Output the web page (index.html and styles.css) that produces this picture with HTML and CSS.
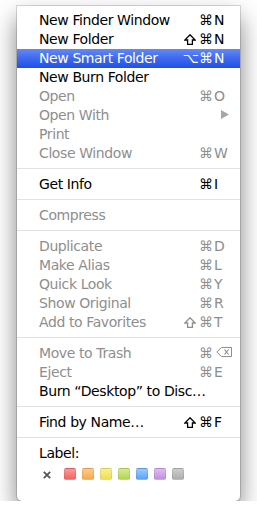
FILE: index.html
```html
<!DOCTYPE html>
<html>
<head>
<meta charset="utf-8">
<link rel="stylesheet" href="styles.css">
</head>
<body>
<div class="menu">
  <div class="item"><span class="label">New Finder Window</span><span class="mods">⌘</span><span class="key">N</span></div>
  <div class="item"><span class="label">New Folder</span><span class="mods"><svg class="shift" width="12" height="11" viewBox="0 0 12 11"><path d="M6 0.8 L11.2 6 H8.4 V10.3 H3.6 V6 H0.8 Z" fill="none" stroke="currentColor" stroke-width="1.3" stroke-linejoin="miter"/></svg>⌘</span><span class="key">N</span></div>
  <div class="item hl"><span class="label">New Smart Folder</span><span class="mods">⌥⌘</span><span class="key">N</span></div>
  <div class="item"><span class="label">New Burn Folder</span><span class="mods"></span><span class="key"></span></div>
  <div class="item off"><span class="label">Open</span><span class="mods">⌘</span><span class="key">O</span></div>
  <div class="item off"><span class="label">Open With</span><span class="mods"></span><span class="key"><svg class="arrow" width="8" height="9" viewBox="0 0 8 9"><path d="M0 0 L8 4.5 L0 9 Z" fill="#a6a6a6"/></svg></span></div>
  <div class="item off"><span class="label">Print</span><span class="mods"></span><span class="key"></span></div>
  <div class="item off"><span class="label">Close Window</span><span class="mods">⌘</span><span class="key">W</span></div>
  <div class="sep"></div>
  <div class="item"><span class="label">Get Info</span><span class="mods">⌘</span><span class="key">I</span></div>
  <div class="sep"></div>
  <div class="item off"><span class="label">Compress</span><span class="mods"></span><span class="key"></span></div>
  <div class="sep"></div>
  <div class="item off"><span class="label">Duplicate</span><span class="mods">⌘</span><span class="key">D</span></div>
  <div class="item off"><span class="label">Make Alias</span><span class="mods">⌘</span><span class="key">L</span></div>
  <div class="item off"><span class="label">Quick Look</span><span class="mods">⌘</span><span class="key">Y</span></div>
  <div class="item off"><span class="label">Show Original</span><span class="mods">⌘</span><span class="key">R</span></div>
  <div class="item off"><span class="label">Add to Favorites</span><span class="mods"><svg class="shift" width="12" height="11" viewBox="0 0 12 11"><path d="M6 0.8 L11.2 6 H8.4 V10.3 H3.6 V6 H0.8 Z" fill="none" stroke="currentColor" stroke-width="1.3" stroke-linejoin="miter"/></svg>⌘</span><span class="key">T</span></div>
  <div class="sep"></div>
  <div class="item off"><span class="label">Move to Trash</span><span class="mods">⌘</span><span class="key"><svg class="del" width="16" height="10" viewBox="0 0 16 10"><path d="M5.5 0.5 H15.5 V9.5 H5.5 L0.8 5 Z" fill="none" stroke="#8e8e8e" stroke-width="1"/><path d="M8.5 2.5 L12.5 7.5 M12.5 2.5 L8.5 7.5" stroke="#8e8e8e" stroke-width="1.2"/></svg></span></div>
  <div class="item off"><span class="label">Eject</span><span class="mods">⌘</span><span class="key">E</span></div>
  <div class="item"><span class="label">Burn “Desktop” to Disc…</span><span class="mods"></span><span class="key"></span></div>
  <div class="sep"></div>
  <div class="item"><span class="label">Find by Name…</span><span class="mods"><svg class="shift" width="12" height="11" viewBox="0 0 12 11"><path d="M6 0.8 L11.2 6 H8.4 V10.3 H3.6 V6 H0.8 Z" fill="none" stroke="currentColor" stroke-width="1.3" stroke-linejoin="miter"/></svg>⌘</span><span class="key">F</span></div>
  <div class="sep"></div>
  <div class="item"><span class="label">Label:</span><span class="mods"></span><span class="key"></span></div>
  <div class="labels">
    <svg class="none" width="8" height="8" viewBox="0 0 8 8"><path d="M0.8 0.8 L7.2 7.2 M7.2 0.8 L0.8 7.2" stroke="#555" stroke-width="1.8"/></svg>
    <span class="sw red"></span>
    <span class="sw orange"></span>
    <span class="sw yellow"></span>
    <span class="sw green"></span>
    <span class="sw blue"></span>
    <span class="sw purple"></span>
    <span class="sw gray"></span>
  </div>
</div>
</body>
</html>
```
FILE: styles.css
```css
html, body {
  margin: 0;
  background: #fff;
}
body {
  font-family: "DejaVu Sans", "Liberation Sans", sans-serif;
  font-size: 14px;
}
.menu {
  margin: 6px 0 0 17px;
  width: 223px;
  box-sizing: border-box;
  background: #fff;
  border-radius: 0 0 5px 5px;
  padding: 5px 0 14px;
  box-shadow: 0 0 0 1px rgba(0, 0, 0, 0.14), 0 12px 24px rgba(0, 0, 0, 0.5);
}
.item {
  display: grid;
  grid-template-columns: 1fr auto 18px;
  height: 19px;
  line-height: 19px;
  padding: 0 8px 0 22px;
  color: #000;
  white-space: nowrap;
}
.label {
  letter-spacing: -0.4px;
}
.item.off {
  color: #8e8e8e;
}
.item.hl {
  color: #fff;
  background: linear-gradient(to bottom, #6488f4 0%, #3e69ef 50%, #1f51e9 100%);
}
.mods {
  text-align: right;
  padding-right: 1px;
}
.shift {
  vertical-align: -1px;
  margin-right: 3px;
}
.key {
  text-align: left;
}
.arrow {
  display: block;
  margin: 4px 0 0 7px;
}
.del {
  display: block;
  margin: 3px 0 0 2px;
}
.sep {
  height: 7px;
  padding-top: 5px;
}
.sep::after {
  content: "";
  display: block;
  height: 1px;
  background: #e2e2e2;
}
.labels {
  display: flex;
  align-items: flex-start;
  height: 24px;
  padding-left: 26px;
}
.none {
  margin-top: 8px;
  margin-right: 13px;
}
.sw {
  width: 12px;
  height: 12px;
  margin-top: 5px;
  margin-right: 6px;
  border-radius: 2px;
  box-sizing: border-box;
  border: 1px solid rgba(0, 0, 0, 0.08);
}
.red { background: linear-gradient(#fb9a9a, #f46464); }
.orange { background: linear-gradient(#fbcb8c, #f6aa52); }
.yellow { background: linear-gradient(#f8ef98, #efdf52); }
.green { background: linear-gradient(#d6ea94, #b5d452); }
.blue { background: linear-gradient(#9ccaf9, #5ca3f5); }
.purple { background: linear-gradient(#ddbdee, #c492dd); }
.gray { background: linear-gradient(#cdcdcd, #aeaeae); }
```
